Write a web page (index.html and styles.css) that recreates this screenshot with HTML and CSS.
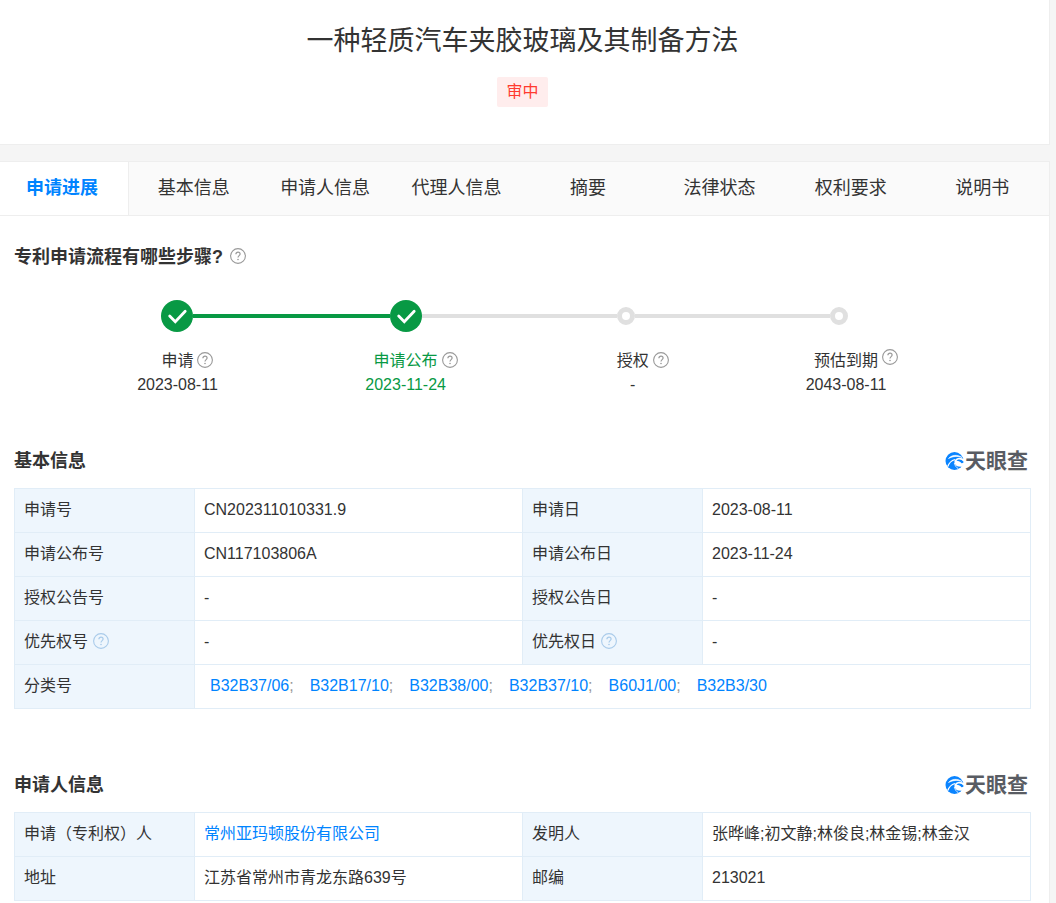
FILE: index.html
```html
<!DOCTYPE html>
<html lang="zh-CN">
<head>
  <meta charset="UTF-8">
  <meta name="viewport" content="width=device-width, initial-scale=1.0">
  <title>一种轻质汽车夹胶玻璃及其制备方法</title>
  <link rel="stylesheet" href="styles.css">
</head>
<body>
  <svg class="sprite" aria-hidden="true">
    <symbol id="help" viewBox="0 0 16 16">
      <circle cx="8" cy="8" r="7.4" fill="none" stroke="currentColor" stroke-width="1.1"/>
      <path d="M5.9 6.3c0-1.3.9-2.1 2.1-2.1s2.1.8 2.1 1.9c0 1.5-2.1 1.6-2.1 3.4" fill="none" stroke="currentColor" stroke-width="1.2"/>
      <circle cx="8" cy="11.5" r=".8" fill="currentColor"/>
    </symbol>
    <symbol id="check" viewBox="0 0 32 32">
      <circle cx="16" cy="16" r="16" fill="#089944"/>
      <path d="M8.700 16l5.600 5.800L24.200 11.300" fill="none" stroke="#fff" stroke-width="2.800" stroke-linecap="round"/>
    </symbol>
    <symbol id="logo" viewBox="0 0 20 20">
      <circle cx="9.500" cy="10" r="9" fill="#0a84ff"/>
      <path d="M3.500 7.500C7 3.800 12 3.200 17 6.500C12.500 4.800 8 5.200 3.500 7.500z" fill="#fff" stroke="#fff" stroke-width=".6"/>
      <path d="M20 9C16.500 5.800 11.500 6 9.800 9.200C8.500 12 10.500 15 13.500 15.500L16.500 15.800L20 12z" fill="#fff"/>
      <path d="M2.800 15.500C4 12 6.500 9.500 10 8.500" fill="none" stroke="#fff" stroke-width="1.300"/>
      <path d="M11.500 9.800c1.500-2 5-2 7.300 1.200-.8 1-1.600 1.300-2.300 1.200-1-1.300-2.800-2.200-5-2.400z" fill="#0a84ff"/>
      <path d="M9.300 12c.5 2.500 2 4.500 4.300 6" fill="none" stroke="#fff" stroke-width=".8"/>
    </symbol>
  </svg>

  <div class="page">
    <header class="title-card">
      <h1>一种轻质汽车夹胶玻璃及其制备方法</h1>
      <span class="status">审中</span>
    </header>

    <main class="detail">
      <nav class="tabs">
        <a class="active" href="#progress">申请进展</a>
        <a href="#base">基本信息</a>
        <a href="#applicant">申请人信息</a>
        <a href="#agent">代理人信息</a>
        <a href="#summary">摘要</a>
        <a href="#law">法律状态</a>
        <a href="#claims">权利要求</a>
        <a href="#manual">说明书</a>
      </nav>

      <section class="progress" id="progress">
        <div class="section-head">
          <h2>专利申请流程有哪些步骤?<svg class="help"><use href="#help"/></svg></h2>
        </div>
        <ol class="steps">
          <li class="step done">
            <div class="track"><svg class="check"><use href="#check"/></svg></div>
            <div class="label">
              <span class="name">申请<svg class="help"><use href="#help"/></svg></span>
              <time>2023-08-11</time>
            </div>
          </li>
          <li class="step current">
            <div class="track"><svg class="check"><use href="#check"/></svg></div>
            <div class="label">
              <span class="name">申请公布<svg class="help"><use href="#help"/></svg></span>
              <time>2023-11-24</time>
            </div>
          </li>
          <li class="step">
            <div class="track"><i class="ring"></i></div>
            <div class="label">
              <span class="name">授权<svg class="help"><use href="#help"/></svg></span>
              <span>-</span>
            </div>
          </li>
          <li class="step last">
            <div class="track"><i class="ring"></i></div>
            <div class="label">
              <span class="name">预估到期<svg class="help"><use href="#help"/></svg></span>
              <time>2043-08-11</time>
            </div>
          </li>
        </ol>
      </section>

      <section class="info" id="base">
        <div class="section-head">
          <h2>基本信息</h2>
          <span class="brand"><svg><use href="#logo"/></svg>天眼查</span>
        </div>
        <table>
          <tr><th>申请号</th><td>CN202311010331.9</td><th>申请日</th><td>2023-08-11</td></tr>
          <tr><th>申请公布号</th><td>CN117103806A</td><th>申请公布日</th><td>2023-11-24</td></tr>
          <tr><th>授权公告号</th><td>-</td><th>授权公告日</th><td>-</td></tr>
          <tr>
            <th>优先权号<svg class="help"><use href="#help"/></svg></th><td>-</td>
            <th>优先权日<svg class="help"><use href="#help"/></svg></th><td>-</td>
          </tr>
          <tr>
            <th>分类号</th>
            <td colspan="3">
              <ul class="codes">
                <li><a href="#">B32B37/06</a>;</li>
                <li><a href="#">B32B17/10</a>;</li>
                <li><a href="#">B32B38/00</a>;</li>
                <li><a href="#">B32B37/10</a>;</li>
                <li><a href="#">B60J1/00</a>;</li>
                <li><a href="#">B32B3/30</a></li>
              </ul>
            </td>
          </tr>
        </table>
      </section>

      <section class="info" id="applicant">
        <div class="section-head">
          <h2>申请人信息</h2>
          <span class="brand"><svg><use href="#logo"/></svg>天眼查</span>
        </div>
        <table>
          <tr><th>申请（专利权）人</th><td><a href="#">常州亚玛顿股份有限公司</a></td><th>发明人</th><td>张晔峰;初文静;林俊良;林金锡;林金汉</td></tr>
          <tr><th>地址</th><td>江苏省常州市青龙东路639号</td><th>邮编</th><td>213021</td></tr>
        </table>
      </section>
    </main>
  </div>
</body>
</html>
```

FILE: styles.css
```css
* {
  box-sizing: border-box;
}
body {
  margin: 0;
  background: #f5f5f5;
  color: #333;
  font: 16px/24px "Liberation Sans", "Noto Sans CJK SC", sans-serif;
}
h1, h2, ol, ul {
  margin: 0;
  padding: 0;
}
ol, ul {
  list-style: none;
}
a {
  color: #0084ff;
  text-decoration: none;
}
.sprite {
  display: none;
}
.page {
  display: flex;
  flex-direction: column;
  min-height: 100vh;
  margin-right: 6px;
}
.title-card {
  display: flex;
  flex-direction: column;
  align-items: center;
  gap: 16px;
  padding: 21px 4px 37px 0;
  background: #fff;
  border: solid #eee;
  border-width: 0 1px 1px 0;
}
h1 {
  font-size: 27px;
  font-weight: 400;
  line-height: 40px;
}
.status {
  padding: 3px 9px;
  background: #ffeded;
  border-radius: 2px;
  color: #ff3b30;
}
.detail {
  flex: 1;
  margin-top: 16px;
  background: #fff;
  border: solid #eee;
  border-width: 1px 1px 0 0;
}

/* tabs */
.tabs {
  display: grid;
  grid-template-columns: 129px repeat(7, 1fr);
  background: #fafafa;
  border-bottom: 1px solid #eee;
}
.tabs a {
  padding-right: 2px;
  color: #333;
  font-size: 18px;
  line-height: 53px;
  text-align: center;
}
.tabs .active {
  padding-right: 4px;
  background: #fff;
  border-right: 1px solid #eee;
  color: #0084ff;
  font-weight: 700;
}

.section-head {
  display: flex;
  align-items: center;
  justify-content: space-between;
  height: 56px;
  padding: 2px 3px 0 0;
}
h2 {
  font-size: 18px;
}
.help {
  width: 16px;
  height: 16px;
  color: #999;
}
h2 .help {
  margin-left: 7px;
  vertical-align: -1px;
}
.progress {
  padding: 12px 18px 0 14px;
}

/* steps */
.steps {
  display: grid;
  grid-template-columns: 228fr 227fr 213fr 18px;
  margin: 16px 18% 0 14.5%;
}
.track {
  display: flex;
  align-items: center;
  height: 32px;
}
.track::after {
  content: "";
  flex: 1;
  height: 4px;
  background: #e0e0e0;
}
.done .track::after {
  background: #089944;
}
.last .track::after {
  display: none;
}
.check {
  width: 32px;
  height: 32px;
}
.ring {
  width: 18px;
  height: 18px;
  border: 5px solid #e0e0e0;
  border-radius: 50%;
}
.label {
  display: flex;
  flex-direction: column;
  align-items: center;
  width: 32px;
  margin-top: 17px;
  white-space: nowrap;
}
.name {
  position: relative;
}
.name .help {
  position: absolute;
  top: 3px;
  left: 100%;
  margin-left: 4px;
}
.last .name .help {
  top: 0;
}
.current .label {
  color: #089944;
}

/* info tables */
.info {
  padding: 0 18px 0 14px;
}
.info + .info {
  margin-top: 47px;
}
.progress + .info {
  margin-top: 35px;
}
.brand {
  display: flex;
  align-items: center;
  color: #595c63;
  font-size: 21px;
  font-weight: 700;
}
.brand svg {
  width: 20px;
  height: 20px;
}
table {
  width: 100%;
  border-collapse: collapse;
  table-layout: fixed;
}
th, td {
  height: 44px;
  padding: 0 9px 2px;
  border: 1px solid #e1edf7;
  font-weight: 400;
  text-align: left;
}
th {
  width: 180px;
  background: #eef6fd;
}
th .help {
  margin-left: 5px;
  color: #a9cbea;
  vertical-align: -2px;
}
.codes {
  display: flex;
  gap: 16px;
  padding-left: 6px;
  color: #999;
}
```
